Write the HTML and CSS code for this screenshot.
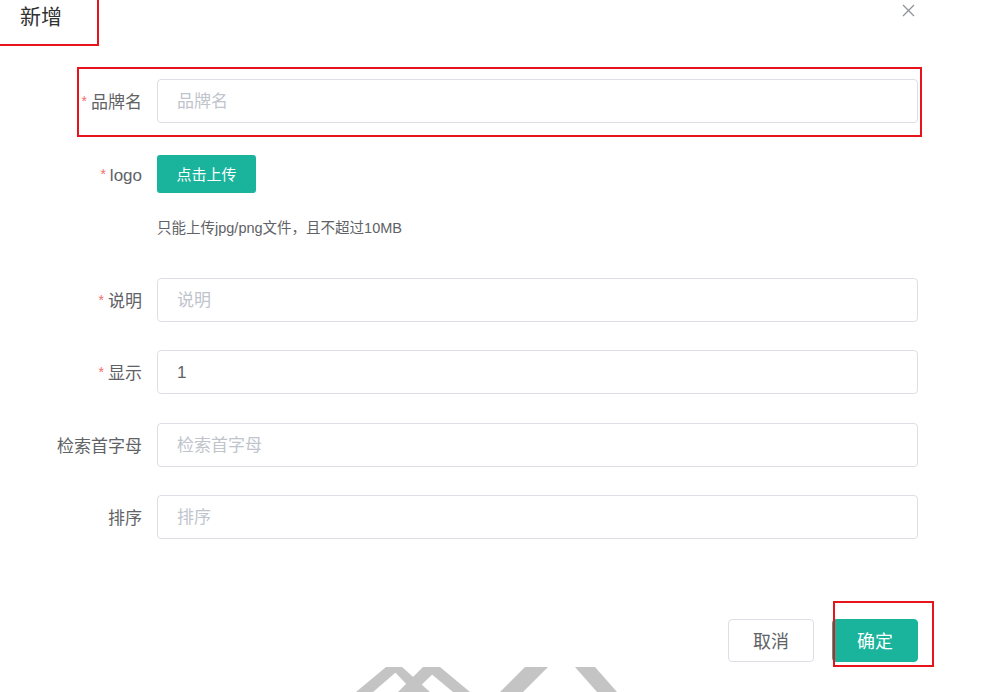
FILE: index.html
```html
<!DOCTYPE html>
<html lang="zh-CN">
<head>
    <meta charset="UTF-8">
    <meta name="viewport" content="width=device-width, initial-scale=1.0">
    <title>新增品牌</title>
    <link rel="stylesheet" href="styles.css">
</head>
<body>
    <div class="dialog">
        <!-- Header -->
        <div class="dialog-header">
            <span class="dialog-title">新增</span>
            <button class="dialog-close" type="button" aria-label="关闭">
                <svg width="13" height="13" viewBox="0 0 13 13">
                    <path d="M1 1 L12 12 M12 1 L1 12" stroke="#909399" stroke-width="1.3" fill="none"/>
                </svg>
            </button>
        </div>

        <!-- Form -->
        <form class="dialog-body">
            <div class="form-item required marked">
                <label class="form-label">品牌名</label>
                <div class="form-content">
                    <input class="form-input" type="text" placeholder="品牌名">
                </div>
            </div>

            <div class="form-item required upload-item">
                <label class="form-label">logo</label>
                <div class="form-content">
                    <div class="upload-line">
                        <button class="btn-upload" type="button">点击上传</button>
                    </div>
                    <div class="upload-tip">只能上传jpg/png文件，且不超过10MB</div>
                </div>
            </div>

            <div class="form-item required">
                <label class="form-label">说明</label>
                <div class="form-content">
                    <input class="form-input" type="text" placeholder="说明">
                </div>
            </div>

            <div class="form-item required">
                <label class="form-label">显示</label>
                <div class="form-content">
                    <input class="form-input" type="text" value="1">
                </div>
            </div>

            <div class="form-item">
                <label class="form-label">检索首字母</label>
                <div class="form-content">
                    <input class="form-input" type="text" placeholder="检索首字母">
                </div>
            </div>

            <div class="form-item">
                <label class="form-label">排序</label>
                <div class="form-content">
                    <input class="form-input" type="text" placeholder="排序">
                </div>
            </div>
        </form>

        <!-- Footer -->
        <div class="dialog-footer">
            <button class="btn" type="button">取消</button>
            <button class="btn btn-primary marked" type="button">确定</button>
        </div>

        <svg class="watermark" viewBox="330 660 300 32">
            <polygon points="356,692 386,667 402,667 373,692" />
            <polygon points="390,667 402,667 430,692 414,692" />
            <polygon points="398,692 423,667 440,667 414,692" />
            <polygon points="423,667 440,667 470,692 453,692" />
            <polygon points="500,692 525,667 548,667 523,692" />
            <polygon points="575,667 595,667 617,692 597,692" />
        </svg>
    </div>
</body>
</html>
```

FILE: styles.css
```css
:root {
    --primary: #1ab39c;
    --text: #303133;
    --label: #606266;
    --placeholder: #c0c4cc;
    --border: #dcdfe6;
    --danger: #f56c6c;
    --mark: #e8141c;
}

* {
    margin: 0;
    padding: 0;
    box-sizing: border-box;
    font-family: "Liberation Sans", "Noto Sans CJK SC", sans-serif;
}

html, body {
    height: 100%;
    overflow: hidden;
    background-color: #fff;
}

.dialog {
    position: relative;
    width: 100%;
    height: 100%;
    background-color: #fff;
}

/* Header */
.dialog-header {
    display: flex;
    justify-content: space-between;
    align-items: flex-start;
    height: 34px;
    padding: 0 67px 0 20px;
}

.dialog-title {
    position: relative;
    font-size: 21px;
    line-height: 34px;
    color: var(--text);
}

/* annotation box around the title */
.dialog-title::after {
    content: '';
    position: absolute;
    top: -10px;
    left: -30px;
    width: 105px;
    height: 52px;
    border: 2px solid var(--mark);
}

.dialog-close {
    margin-top: 4px;
    border: none;
    background: none;
    cursor: pointer;
    line-height: 0;
}

/* Form */
.dialog-body {
    padding: 45px 64px 0 0;
}

.form-item {
    position: relative;
    display: flex;
    margin-bottom: 28.5px;
}

.form-label {
    width: 157px;
    height: 44px;
    flex-shrink: 0;
    padding-right: 15px;
    text-align: right;
    font-size: 17px;
    line-height: 47px;
    color: var(--label);
}

.required .form-label::before {
    content: '*';
    position: relative;
    top: -2px;
    color: var(--danger);
    font-size: 14px;
    line-height: 1;
    margin-right: 4px;
}

.form-content {
    flex: 1;
}

.form-input {
    display: block;
    width: 100%;
    height: 44px;
    padding: 2px 19px 0;
    border: 1px solid var(--border);
    border-radius: 4px;
    font-size: 17px;
    color: var(--label);
    outline: none;
    background-color: #fff;
}

.form-input::placeholder {
    color: var(--placeholder);
}

.upload-item {
    margin-bottom: 40px;
}

.upload-line {
    display: flex;
    align-items: center;
    height: 44px;
}

.btn-upload {
    width: 99px;
    height: 38px;
    border: none;
    border-radius: 3px;
    background-color: var(--primary);
    color: #fff;
    font-size: 15px;
    cursor: pointer;
}

.upload-tip {
    margin-top: 22px;
    font-size: 14.5px;
    line-height: 20px;
    color: var(--label);
}

/* Footer */
.dialog-footer {
    display: flex;
    justify-content: flex-end;
    gap: 18px;
    padding: 51px 64px 0 0;
}

.btn {
    position: relative;
    width: 86px;
    height: 43px;
    border: 1px solid var(--border);
    border-radius: 4px;
    background-color: #fff;
    color: var(--label);
    font-size: 18px;
    cursor: pointer;
}

.btn-primary {
    border-color: var(--primary);
    background-color: var(--primary);
    color: #fff;
}

/* annotation boxes */
.form-item.marked::after {
    content: '';
    position: absolute;
    top: -12px;
    left: 77px;
    right: -4px;
    bottom: -14px;
    border: 2px solid var(--mark);
    pointer-events: none;
}

.btn.marked::after {
    content: '';
    position: absolute;
    top: -19px;
    left: 0;
    right: -17px;
    bottom: -6px;
    border: 2px solid var(--mark);
    pointer-events: none;
}

.watermark {
    position: absolute;
    left: 330px;
    top: 660px;
    width: 300px;
    height: 32px;
    fill: #c4c4c4;
    pointer-events: none;
}
```
